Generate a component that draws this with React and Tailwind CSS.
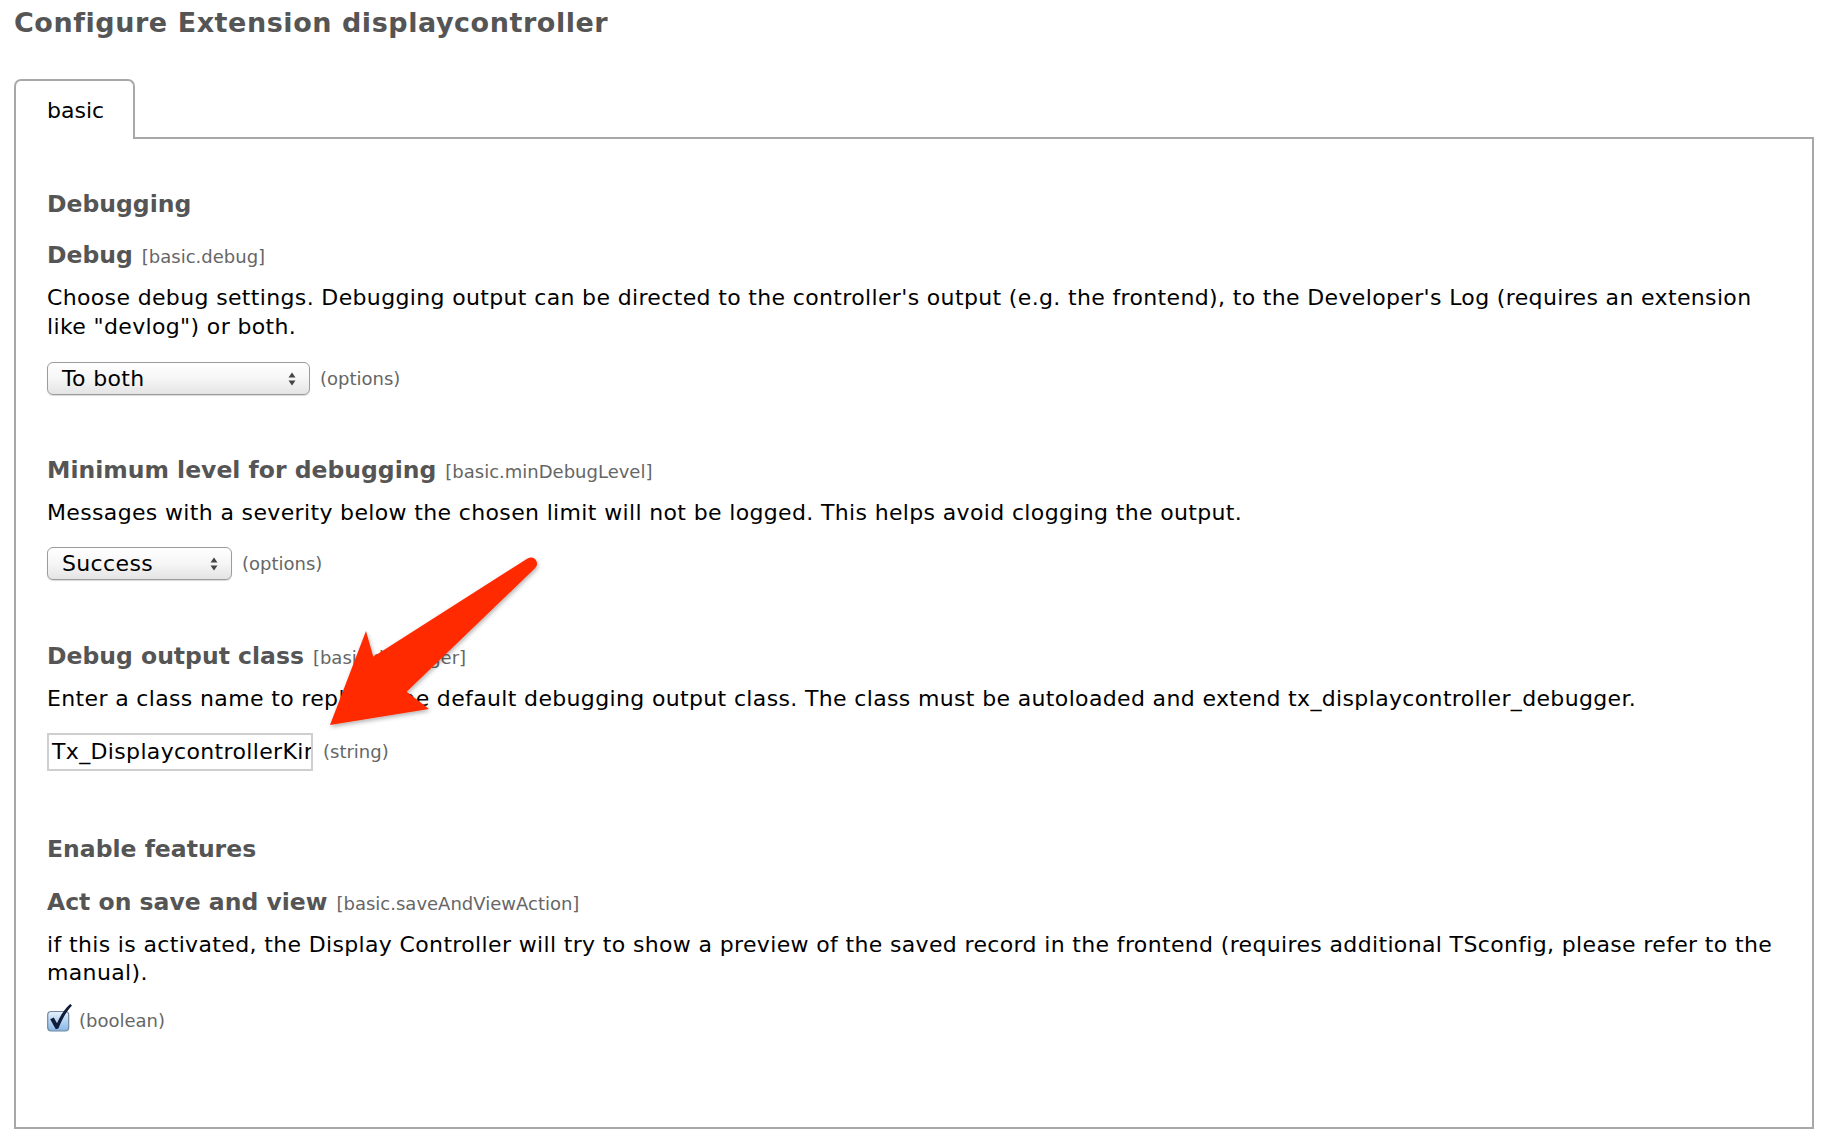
import React from "react";

function SelectBox({ value, width }) {
  return (
    <div
      className={`flex items-center justify-between h-[33px] rounded-[6px] border border-[#9c9c9c] bg-gradient-to-b from-white via-[#f6f6f6] to-[#e4e4e4] shadow-[0_1px_1px_rgba(0,0,0,0.15)] pl-[14px] pr-[13px] text-[22px] leading-[29px] tracking-[0.35px] text-black ${width}`}
    >
      <span>{value}</span>
      <svg width="8" height="16" viewBox="0 0 8 16" className="shrink-0">
        <path d="M4 1.5 L7.5 6.5 L0.5 6.5 Z" fill="#444" />
        <path d="M4 14.5 L7.5 9.5 L0.5 9.5 Z" fill="#444" />
      </svg>
    </div>
  );
}

function Hint({ children }) {
  return <span className="text-[18px] leading-[24px] text-[#666]">{children}</span>;
}

function Label({ title, path }) {
  return (
    <div className="flex items-baseline gap-[9px] text-[#555] leading-[30px]">
      <span className="text-[23.5px] font-bold">{title}</span>
      <span className="text-[18px] text-[#666]">[{path}]</span>
    </div>
  );
}

function CheckBox() {
  return (
    <svg width="26" height="29" viewBox="0 0 26 29" className="shrink-0 -mt-[7px]">
      <defs>
        <linearGradient id="cbg" x1="0" y1="0" x2="0" y2="1">
          <stop offset="0" stopColor="#e6f1fb" />
          <stop offset="0.45" stopColor="#b9d6f2" />
          <stop offset="1" stopColor="#86b6e6" />
        </linearGradient>
      </defs>
      <rect x="0.7" y="8.5" width="21" height="19.5" rx="3.5" fill="url(#cbg)" stroke="#71879f" strokeWidth="1.2" />
      <path d="M3.2 16.3 L6.8 14.6 L10 20.2 C13.5 12.5 17.5 6 23.2 1 L25 2.6 C19.5 8.5 15 16 11.4 25.6 L8.8 26.2 Z" fill="#0f1c3c" />
    </svg>
  );
}

const body = "text-[22px] leading-[29px] tracking-[0.35px]";

export default function App() {
  return (
    <div className="relative w-[1832px] min-h-[1146px] bg-white font-['DejaVu_Sans',sans-serif] text-black">
      <div className="pl-[14px] pt-[5px]">
        <h1 className="text-[27px] leading-[36px] font-bold tracking-[0.55px] text-[#555]">
          Configure Extension displaycontroller
        </h1>

        <div className="mt-[38px] flex">
          <div className="relative z-10 -mb-[2px] w-[121px] rounded-t-[7px] border-2 border-b-0 border-[#a8a8a8] bg-white pl-[31px] pt-[15px] pb-[14px] text-[22px] leading-[29px] text-black">
            basic
          </div>
        </div>

        <div className="w-[1800px] h-[992px] border-2 border-[#a8a8a8] pl-[31px] pr-[24px] pt-[50px]">
          <h2 className="text-[23.5px] leading-[30px] font-bold text-[#555]">Debugging</h2>

          <div className="mt-[21px]">
            <Label title="Debug" path="basic.debug" />
            <p className={`mt-[11px] ${body}`}>
              Choose debug settings. Debugging output can be directed to the controller's output (e.g. the frontend), to the Developer's Log (requires an extension like "devlog") or both.
            </p>
            <div className="mt-[21px] flex items-center gap-[10px]">
              <SelectBox value="To both" width="w-[263px]" />
              <Hint>(options)</Hint>
            </div>
          </div>

          <div className="mt-[60px]">
            <Label title="Minimum level for debugging" path="basic.minDebugLevel" />
            <p className={`mt-[11px] ${body}`}>
              Messages with a severity below the chosen limit will not be logged. This helps avoid clogging the output.
            </p>
            <div className="mt-[20px] flex items-center gap-[10px]">
              <SelectBox value="Success" width="w-[185px]" />
              <Hint>(options)</Hint>
            </div>
          </div>

          <div className="mt-[61px]">
            <Label title="Debug output class" path="basic.debugger" />
            <p className={`mt-[11px] ${body}`}>
              Enter a class name to replace the default debugging output class. The class must be autoloaded and extend tx_displaycontroller_debugger.
            </p>
            <div className="mt-[20px] flex items-center gap-[10px]">
              <div className="w-[266px] h-[38px] border-2 border-[#cfcfcf] bg-white pl-[3px] overflow-hidden whitespace-nowrap text-[22px] leading-[34px] tracking-[0.35px] text-black">
                Tx_DisplaycontrollerKint_Debugger
              </div>
              <Hint>(string)</Hint>
            </div>
          </div>

          <h2 className="mt-[63px] text-[23.5px] leading-[30px] font-bold text-[#555]">Enable features</h2>

          <div className="mt-[23px]">
            <Label title="Act on save and view" path="basic.saveAndViewAction" />
            <p className={`mt-[12px] text-[22px] leading-[28px] tracking-[0.35px]`}>
              if this is activated, the Display Controller will try to show a preview of the saved record in the frontend (requires additional TSconfig, please refer to the manual).
            </p>
            <div className="mt-[22px] flex items-center gap-[6px]">
              <CheckBox />
              <Hint>(boolean)</Hint>
            </div>
          </div>
        </div>
      </div>

      <svg
        className="absolute left-0 top-0 pointer-events-none"
        width="1832"
        height="1146"
        viewBox="0 0 1832 1146"
      >
        <defs>
          <filter id="ash" x="-10%" y="-10%" width="130%" height="130%">
            <feDropShadow dx="1" dy="2" stdDeviation="2" floodColor="#000" floodOpacity="0.3" />
          </filter>
        </defs>
        <path
          d="M526.7 559 L373.3 656.7 L366 631 L330 725 L429 709 L406.7 691.7 L535 568.3 A5.5 5.5 0 0 0 526.7 559 Z"
          fill="#ff2a00"
          filter="url(#ash)"
        />
      </svg>
    </div>
  );
}
